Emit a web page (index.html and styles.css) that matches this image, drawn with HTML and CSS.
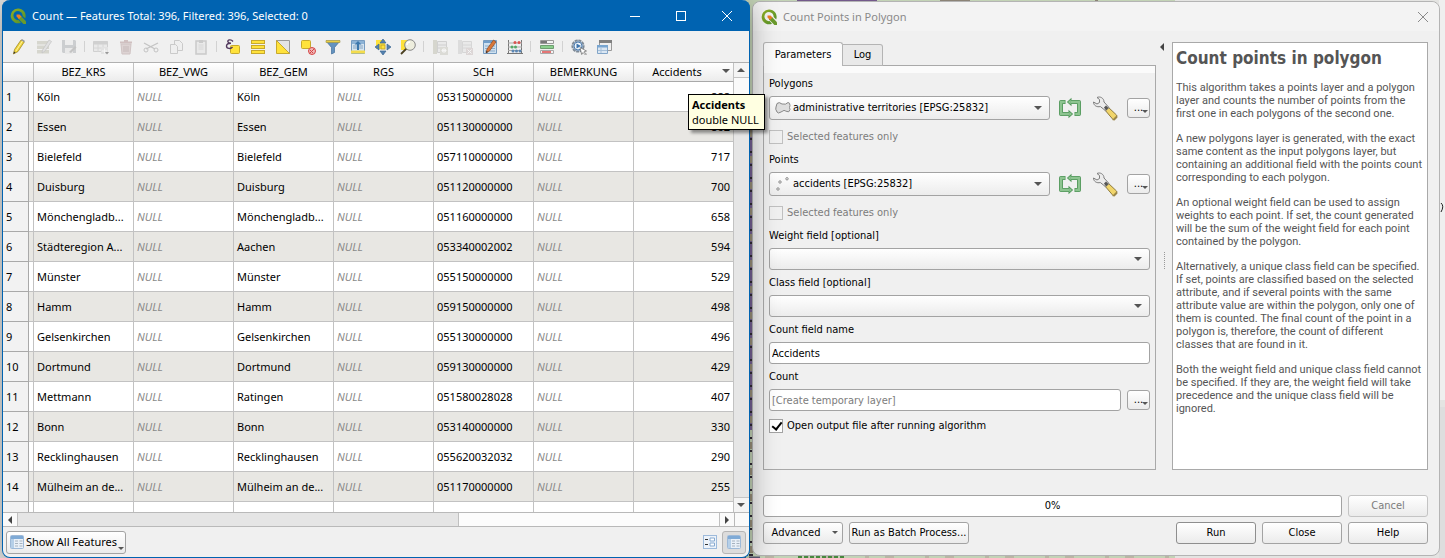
FILE: index.html
```html
<!DOCTYPE html>
<html lang="en">
<head>
<meta charset="utf-8">
<title>Count Points in Polygon</title>
<link rel="stylesheet" href="styles.css">
</head>
<body>
<svg width="0" height="0" class="defs" aria-hidden="true">
  <defs>
    <linearGradient id="qg" x1="0" y1="0" x2="1" y2="1"><stop offset="0" stop-color="#93b023"/><stop offset="1" stop-color="#4f8f2c"/></linearGradient>
    <symbol id="qgis" viewBox="0 0 16 16">
      <path d="M8 0.5a7.4 7.4 0 1 0 3 14.2l-2.4-2.6a4.6 4.6 0 1 1 4-4.2l2.6 2.6A7.5 7.5 0 0 0 8 .5z" fill="url(#qg)"/>
      <path d="M8 8h3l5 5.2V16h-2.600L8 10.600z" fill="#6a9a2c"/>
      <path d="M6.500 6.500h3l2 2-2.500 2.500-2.500-2.500z" fill="#ee7d25"/>
    </symbol>
    <symbol id="refresh" viewBox="0 0 24 22">
      <g fill="none" stroke="#4f9558" stroke-width="4" stroke-linejoin="round"><path d="M7.500 5H3v12H11M16.500 17h4.500v-12H13"/></g>
      <path d="M10.500 12.800v8.400l4.600-4.200zM13.500 .8v8.400L8.900 5z" fill="#4f9558"/>
      <g fill="none" stroke="#8dc490" stroke-width="2.400" stroke-linejoin="round"><path d="M6.800 5H3v12H11.500M17.200 17h3.800v-12H12.500"/></g>
      <path d="M11.400 14.700v4.600l2.600-2.300zM12.600 2.700v4.600L10 5z" fill="#8dc490"/>
    </symbol>
    <symbol id="wrench" viewBox="0 0 26 26">
      <path d="M12.500 13.500l3-3 9 8.500c1 1.500-1.500 5-3.500 4.500z" fill="#f1d56a" stroke="#8d7a3f"/>
      <path d="M20 24l5-5 .5 2.500-3 3z" fill="#9c8748"/>
      <path d="M5 1.500c3-1.500 7 .5 7 4.500l5 5.500-3.500 3.200-5.200-4.200C5 11.500 1.500 9.500 1.500 6l3.500 2 2.500-1.500V3.500z" fill="#ececec" stroke="#7d7d7d"/>
      <path d="M12 11.500l2-2 2.500 2.500-2.500 2.500z" fill="#555"/>
    </symbol>
    <symbol id="grid" viewBox="0 0 14 14">
      <rect x=".5" y=".5" width="13" height="13" rx="1" fill="#e9f0f8" stroke="#9db9d8"/>
      <rect x="1" y="1" width="12" height="3" fill="#7faad6"/><rect x="1" y="4" width="3" height="9" fill="#b5cfe8"/>
      <path d="M5 6h3M9.500 6h3M5 8.500h3M9.500 8.500h3M5 11h3M9.500 11h3" stroke="#a6b2bf"/>
    </symbol>
  </defs>
</svg>

<svg class="map" viewBox="0 0 1445 558" preserveAspectRatio="none" aria-hidden="true">
  <rect width="1445" height="558" fill="#e4e4e2"/>
  <rect x="745" width="430" height="558" fill="#c3d3b6"/>
  <path d="M751 130v300" stroke="#756093" stroke-width="4"/>
  <path d="M751 130v428" stroke="#998f78" stroke-width="4" stroke-dasharray="7 19"/>
  <path d="M751 138v420" stroke="#312b35" stroke-width="4" stroke-dasharray="2 11"/>
  <path d="M280 557.500H760" stroke="#5d5974" stroke-width="2" stroke-dasharray="7 3 12 5"/>
  <path d="M765 557H1175" stroke="#b9b6a4" stroke-width="3" stroke-dasharray="9 31 4 16"/>
  <path d="M798 557H845" stroke="#47883d" stroke-width="2" stroke-dasharray="4 2"/>
  <path d="M797 .500h80" stroke="#73598a"/><path d="M940 .500h30M1095 .500h3" stroke="#8b8376"/>
  <path d="M1439 0h6v400h-6z" fill="#efefef"/><path d="M1439 407h6v151h-6z" fill="#dedede"/>
  <path d="M1441 203q3.500 3 0 9" fill="none" stroke="#222"/>
</svg>

<main class="desktop">
<section class="window table-window">
  <header class="titlebar active">
    <svg class="logo"><use href="#qgis"/></svg>
    <h1>Count — Features Total: 396, Filtered: 396, Selected: 0</h1>
    <button aria-label="Minimize"><svg viewBox="0 0 10 10"><path d="M0 5.500h10"/></svg></button>
    <button aria-label="Maximize"><svg viewBox="0 0 10 10"><rect x=".5" y=".5" width="9" height="9"/></svg></button>
    <button aria-label="Close"><svg viewBox="0 0 10 10"><path d="M0 0l10 10M10 0L0 10"/></svg></button>
  </header>

  <div class="toolbar">
    <button aria-label="Toggle editing"><svg viewBox="0 0 16 16"><path d="M2.500 15l1-4.500L10 1l3.200 2L7 12.500z" fill="#f0d53b" stroke="#a08a2a" stroke-width=".8"/><path d="M10 1l1-1 3 2-.8 1.200z" fill="#999"/><path d="M5 12l6.500-10" stroke="#fff3a0"/><path d="M2.500 15l.4-2.500 1.700 1.100z" fill="#333"/></svg></button>
    <button disabled aria-label="Multi edit"><svg viewBox="0 0 16 16"><path d="M1 2h12v3.500H1zM1 6.500h12V10H1zM1 11h12v3.500H1z" fill="#aaa995"/><path d="M6 14l.5-3L13 1l2.500 1.500L9 12z" fill="#c9c9c9" stroke="#777" stroke-width=".7"/></svg></button>
    <button disabled aria-label="Save edits"><svg viewBox="0 0 16 16"><path d="M1 1h13l1 1v12H2l-1-1z" fill="#8e9499"/><path d="M4 1h8v5H4z" fill="#e8e8e8"/><path d="M4 9h8v6H4z" fill="#ddd"/><path d="M8 13l6-6 1.500 1.500L10 14z" fill="#777"/></svg></button>
    <i class="sep"></i>
    <button disabled aria-label="Add feature"><svg viewBox="0 0 16 16"><path d="M.5 2.500h14v10H.5z" fill="#ddd" stroke="#999"/><path d="M.5 2.500h14v3H.5z" fill="#999"/><path d="M1 9h13M5 5v8M10 5v8" stroke="#aaa"/><path d="M8 8h7v7H8z" fill="#ccc"/><path d="M11.500 9.500v5M9 12h5" stroke="#fff"/><path d="M12 13h4l-2 2.500z" fill="#000"/></svg></button>
    <button disabled aria-label="Delete selected"><svg viewBox="0 0 16 16"><path d="M2 3.500h12M6 2h4" stroke="#986e6e" stroke-width="2"/><path d="M3 5h10l-1 10H4z" fill="#bda2a2" stroke="#997777"/><path d="M6 7v6M8 7v6M10 7v6" stroke="#7b5d5d"/></svg></button>
    <button disabled aria-label="Cut"><svg viewBox="0 0 16 16"><path d="M1 4l11 6M3 10l12-6" stroke="#777" stroke-width="1.300"/><circle cx="13" cy="11" r="2" fill="none" stroke="#777"/><circle cx="3" cy="11" r="2" fill="none" stroke="#777"/></svg></button>
    <button disabled aria-label="Copy"><svg viewBox="0 0 16 16"><path d="M6.500 1.500h5l3 3v7h-8z" fill="#eee" stroke="#888"/><path d="M2.500 5.500h5l2 2v7h-7z" fill="#eee" stroke="#888"/></svg></button>
    <button disabled aria-label="Paste"><svg viewBox="0 0 16 16"><path d="M3 2h10v13H3z" fill="#ddd" stroke="#888" stroke-width="1.500"/><path d="M6 1h4v3H6z" fill="#888"/><path d="M5.500 6h5M5.500 8h5M5.500 10h5" stroke="#aaa"/></svg></button>
    <i class="sep"></i>
    <button aria-label="Select by expression"><svg viewBox="0 0 16 16"><rect x="5.500" y="6.500" width="9" height="8" rx="1" fill="#ffe23b" stroke="#c7a92d"/><path d="M8 2.500C6-.200 2 .800 3 3q.5 1.200 3 1.200Q1.500 4.200 1.500 7c0 3 4.500 3.200 6 .8" fill="none" stroke="#52395e" stroke-width="1.400"/></svg></button>
    <button aria-label="Select all"><svg viewBox="0 0 16 16"><g fill="#ffe23b" stroke="#c7a92d"><rect x="1.500" y="1.500" width="13" height="3"/><rect x="1.500" y="6.500" width="13" height="3"/><rect x="1.500" y="11.500" width="13" height="3"/></g></svg></button>
    <button aria-label="Invert selection"><svg viewBox="0 0 16 16"><path d="M1.500 1.500h13v13z" fill="#e4e4e4" stroke="#999"/><path d="M1.500 1.500v13h13z" fill="#ffe23b" stroke="#c7a92d"/></svg></button>
    <button aria-label="Deselect all"><svg viewBox="0 0 16 16"><rect x="1.500" y="1.500" width="9" height="8" rx="1" fill="#ffe23b" stroke="#c7a92d"/><circle cx="12" cy="12" r="3.500" fill="#f0b7b7" stroke="#d44545"/><path d="M9.500 14.500l5-5M10 11l3 3" stroke="#d44545"/></svg></button>
    <button aria-label="Filter"><svg viewBox="0 0 16 16"><path d="M1 2l5.500 6.500V15l3-1.500v-5L15 2z" fill="#6392bf" stroke="#416f9b" stroke-width=".7"/><path d="M1 1.500h14v2H1z" fill="#e9cf46" stroke="#9d8c35" stroke-width=".5"/></svg></button>
    <button aria-label="Move selection to top"><svg viewBox="0 0 16 16"><path d="M1.500 1.500h13v13h-13z" fill="#d5e4f0" stroke="#779cc1"/><path d="M2 2h12v3H2z" fill="#8db3d6"/><path d="M3 7h10M3 9h10" stroke="#87a5c2"/><path d="M1 11.500h14v3H1z" fill="#f4dc4c"/><path d="M8 2l3.500 3.500H9V11H7V5.500H4.500z" fill="#3c77ac"/></svg></button>
    <button aria-label="Pan to rows"><svg viewBox="0 0 16 16"><path d="M1 1h9v9H1z" fill="#ffe23b"/><path d="M8 0l3 4H5zM8 16l3-4H5zM0 8l4-3v6zM16 8l-4-3v6z" fill="#5481af" stroke="#3c6792" stroke-width=".7"/><rect x="6" y="6" width="4" height="4" fill="#ffe23b" stroke="#c6aa2d"/></svg></button>
    <button aria-label="Zoom to rows"><svg viewBox="0 0 16 16"><path d="M1 1h7v10H1z" fill="#ffe23b"/><path d="M1 15l5.500-5.500" stroke="#4b4020" stroke-width="1.800"/><circle cx="10" cy="6" r="5.300" fill="#eeeede" stroke="#888"/><path d="M7 6a3 3 0 0 1 3-3" stroke="#fff" fill="none" stroke-width="1.500"/></svg></button>
    <i class="sep"></i>
    <button disabled aria-label="New field"><svg viewBox="0 0 16 16"><path d="M1 1h4v14H1z" fill="#aaa995"/><path d="M5.500 2.500h9v11h-9zM5 6h9M5 9h9" fill="#ddd" stroke="#999"/><path d="M8 8h8v8H8z" fill="#b8b8aa"/><path d="M12 9v5M9.500 11.500h5M10 10l4 3M14 10l-4 3" stroke="#fff"/></svg></button>
    <button disabled aria-label="Delete field"><svg viewBox="0 0 16 16"><path d="M1 1h4v14H1z" fill="#bbb"/><path d="M5.500 2.500h9v11h-9zM5 6h9M5 9h9" fill="#ddd" stroke="#aaa"/><path d="M9 9h7v7H9z" fill="#bbaaaa"/><path d="M10.500 10.500l4 4M14.500 10.500l-4 4" stroke="#fff"/></svg></button>
    <button aria-label="Organize columns"><svg viewBox="0 0 16 16"><path d="M1.500 1.500h13v13h-13z" fill="#cfe0ef" stroke="#759bc0"/><path d="M2 2h12v2H2z" fill="#709ecb"/><path d="M3 7h10M3 9.500h10M3 12h10" stroke="#8aabc9"/><path d="M4 14l1-4 6.500-9L14 3 7.500 12z" fill="#d97739" stroke="#8a4a26" stroke-width=".7"/><path d="M4 14l.5-2 1.500 1z" fill="#222"/></svg></button>
    <button aria-label="Field calculator"><svg viewBox="0 0 16 16"><path d="M1.500 1v14M14.500 1v14M0 14.500h16" stroke="#777" fill="none"/><path d="M1 4h14M1 8h14M1 11.500h14" stroke="#aaa"/><g fill="#d9534f"><circle cx="8" cy="3.500" r="1.500"/><circle cx="12" cy="3.500" r="1.500"/></g><g fill="#55a868"><circle cx="5" cy="8" r="1.500"/><circle cx="8.500" cy="8" r="1.500"/></g><g fill="#5a86b4"><circle cx="6" cy="12" r="1.500"/><circle cx="9.500" cy="12" r="1.500"/><circle cx="13" cy="12" r="1.500"/></g></svg></button>
    <i class="sep"></i>
    <button aria-label="Conditional formatting"><svg viewBox="0 0 16 16"><path d="M1.500 1.500h13v3h-13z" fill="#f4f4f4" stroke="#999"/><path d="M2 2h6v2H2z" fill="#777"/><path d="M1.500 6.500h13v3h-13z" fill="#89cf8c" stroke="#6e9d70"/><path d="M1.500 11.500h13v3h-13z" fill="#f4f4f4" stroke="#aaa"/><path d="M3 13h9" stroke="#df4c4c" stroke-width="1.500"/></svg></button>
    <i class="sep"></i>
    <button aria-label="Actions"><svg viewBox="0 0 16 16"><circle cx="7" cy="7" r="5.700" fill="#a8bfd8" stroke="#7e8995" stroke-width="1.800" stroke-dasharray="3 .8"/><circle cx="7" cy="7" r="4" fill="#f1f6fb" stroke="#4f7dad"/><path d="M5.500 4.500L10 7l-4.500 2.500z" fill="#3c74ae"/><path d="M9 8.500l6.500 3.500-2.500.8 2.500 2.500-1 .7-2.500-2.500-1.300 2z" fill="#fff" stroke="#777" stroke-width=".8"/></svg></button>
    <button aria-label="Dock window"><svg viewBox="0 0 16 16"><path d="M3.500 1.500h12v10h-12z" fill="#efefef" stroke="#999"/><path d="M3 1h13v3H3z" fill="#808080"/><path d="M1.500 6.500h10v8h-10z" fill="#dbe7f3" stroke="#82a5c8"/><path d="M1 6h11v2.500H1z" fill="#78a5d0"/><path d="M5 9v5M2 11.500h9" stroke="#a6bfd8"/></svg></button>
  </div>

  <div class="grid-area">
    <div class="grid-view">
      <table>
        <colgroup><col class="c-num"><col class="c-gap"><col span="7"></colgroup>
        <thead><tr><th colspan="2"></th><th>BEZ_KRS</th><th>BEZ_VWG</th><th>BEZ_GEM</th><th>RGS</th><th>SCH</th><th>BEMERKUNG</th><th class="sorted">Accidents<i class="down"></i></th></tr></thead>
        <tbody>
          <tr><th>1</th><td></td><td>Köln</td><td class="null">NULL</td><td>Köln</td><td class="null">NULL</td><td>053150000000</td><td class="null">NULL</td><td class="num">888</td></tr>
          <tr><th>2</th><td></td><td>Essen</td><td class="null">NULL</td><td>Essen</td><td class="null">NULL</td><td>051130000000</td><td class="null">NULL</td><td class="num">802</td></tr>
          <tr><th>3</th><td></td><td>Bielefeld</td><td class="null">NULL</td><td>Bielefeld</td><td class="null">NULL</td><td>057110000000</td><td class="null">NULL</td><td class="num">717</td></tr>
          <tr><th>4</th><td></td><td>Duisburg</td><td class="null">NULL</td><td>Duisburg</td><td class="null">NULL</td><td>051120000000</td><td class="null">NULL</td><td class="num">700</td></tr>
          <tr><th>5</th><td></td><td>Mönchengladb...</td><td class="null">NULL</td><td>Mönchengladb...</td><td class="null">NULL</td><td>051160000000</td><td class="null">NULL</td><td class="num">658</td></tr>
          <tr><th>6</th><td></td><td>Städteregion A...</td><td class="null">NULL</td><td>Aachen</td><td class="null">NULL</td><td>053340002002</td><td class="null">NULL</td><td class="num">594</td></tr>
          <tr><th>7</th><td></td><td>Münster</td><td class="null">NULL</td><td>Münster</td><td class="null">NULL</td><td>055150000000</td><td class="null">NULL</td><td class="num">529</td></tr>
          <tr><th>8</th><td></td><td>Hamm</td><td class="null">NULL</td><td>Hamm</td><td class="null">NULL</td><td>059150000000</td><td class="null">NULL</td><td class="num">498</td></tr>
          <tr><th>9</th><td></td><td>Gelsenkirchen</td><td class="null">NULL</td><td>Gelsenkirchen</td><td class="null">NULL</td><td>055130000000</td><td class="null">NULL</td><td class="num">496</td></tr>
          <tr><th>10</th><td></td><td>Dortmund</td><td class="null">NULL</td><td>Dortmund</td><td class="null">NULL</td><td>059130000000</td><td class="null">NULL</td><td class="num">429</td></tr>
          <tr><th>11</th><td></td><td>Mettmann</td><td class="null">NULL</td><td>Ratingen</td><td class="null">NULL</td><td>051580028028</td><td class="null">NULL</td><td class="num">407</td></tr>
          <tr><th>12</th><td></td><td>Bonn</td><td class="null">NULL</td><td>Bonn</td><td class="null">NULL</td><td>053140000000</td><td class="null">NULL</td><td class="num">330</td></tr>
          <tr><th>13</th><td></td><td>Recklinghausen</td><td class="null">NULL</td><td>Recklinghausen</td><td class="null">NULL</td><td>055620032032</td><td class="null">NULL</td><td class="num">290</td></tr>
          <tr><th>14</th><td></td><td>Mülheim an de...</td><td class="null">NULL</td><td>Mülheim an de...</td><td class="null">NULL</td><td>051170000000</td><td class="null">NULL</td><td class="num">255</td></tr>
          <tr><th></th><td></td><td></td><td></td><td></td><td></td><td></td><td></td><td></td></tr>
        </tbody>
      </table>
      <div class="tooltip" role="tooltip"><b>Accidents</b><br>double NULL</div>
    </div>
    <div class="vscroll"><button aria-label="Scroll up"><i class="up"></i></button><span></span><button aria-label="Scroll down"><i class="down"></i></button></div>
    <div class="hscroll"><button aria-label="Scroll left"><i class="left"></i></button><span class="thumb"></span><span class="track"></span><button aria-label="Scroll right"><i class="right"></i></button></div>
    <div class="corner"></div>
  </div>

  <footer class="statusbar">
    <button class="btn show-all"><svg><use href="#grid"/></svg>Show All Features<i class="down mini"></i></button>
    <button class="view" aria-label="Form view"><svg viewBox="0 0 14 14"><rect x=".5" y=".5" width="13" height="13" fill="#edf3fa" stroke="#9dbadb"/><path d="M2 4.500h3M2 9.500h3" stroke="#333"/><path d="M7 3h4.500v3H7zM7 8h4.500v3H7z" fill="#fff" stroke="#86a9d0"/></svg></button>
    <button class="view on" aria-label="Table view"><svg><use href="#grid"/></svg></button>
  </footer>
</section>

<section class="window dialog">
  <header class="titlebar">
    <svg class="logo"><use href="#qgis"/></svg>
    <h1>Count Points in Polygon</h1>
    <button aria-label="Close"><svg viewBox="0 0 10 10"><path d="M0 0l10 10M10 0L0 10"/></svg></button>
  </header>

  <div class="dialog-main">
    <div class="tabs">
      <div class="tablist" role="tablist">
        <button role="tab" aria-selected="true" class="tab current">Parameters</button>
        <button role="tab" aria-selected="false" class="tab">Log</button>
      </div>
      <form class="pane" id="params">
        <label class="caption" for="polygons">Polygons</label>
        <div class="row">
          <div class="combo tall"><svg viewBox="0 0 16 14"><path d="M2 2.500Q4 .500 7 3q4 1 6-1.500 2 0 2 3-1 2 0 4-1 3.500-3 2Q9 8 6 11q-3 2-4 0Q0 8 1 6z" fill="#dedede" stroke="#888"/></svg><select id="polygons"><option>administrative territories [EPSG:25832]</option></select><i class="down"></i></div>
          <button type="button" class="flat" aria-label="Iterate over this layer"><svg class="refresh"><use href="#refresh"/></svg></button>
          <button type="button" class="flat" aria-label="Advanced options"><svg class="wrench"><use href="#wrench"/></svg></button>
          <button type="button" class="btn dots">...<i class="down mini"></i></button>
        </div>
        <label class="check"><input type="checkbox" disabled>Selected features only</label>
        <label class="caption" for="points">Points</label>
        <div class="row">
          <div class="combo tall"><svg viewBox="0 0 16 14"><g fill="#fff" stroke="#888"><circle cx="12" cy="1.800" r="1.200"/><circle cx="5" cy="5" r="1.200"/><circle cx="3" cy="12" r="1.200"/></g></svg><select id="points"><option>accidents [EPSG:25832]</option></select><i class="down"></i></div>
          <button type="button" class="flat" aria-label="Iterate over this layer"><svg class="refresh"><use href="#refresh"/></svg></button>
          <button type="button" class="flat" aria-label="Advanced options"><svg class="wrench"><use href="#wrench"/></svg></button>
          <button type="button" class="btn dots">...<i class="down mini"></i></button>
        </div>
        <label class="check"><input type="checkbox" disabled>Selected features only</label>
        <label class="caption" for="weight">Weight field [optional]</label>
        <div class="combo"><select id="weight"><option></option></select><i class="down"></i></div>
        <label class="caption" for="class">Class field [optional]</label>
        <div class="combo"><select id="class"><option></option></select><i class="down"></i></div>
        <label class="caption" for="name">Count field name</label>
        <input class="text" id="name" type="text" value="Accidents">
        <label class="caption" for="out">Count</label>
        <div class="row">
          <input class="text" id="out" type="text" placeholder="[Create temporary layer]">
          <button type="button" class="btn dots">...<i class="down mini"></i></button>
        </div>
        <label class="check open"><input type="checkbox" checked>Open output file after running algorithm</label>
      </form>
    </div>
    <div class="splitter"><i class="left"></i><span></span></div>
    <article class="help">
      <h2>Count points in polygon</h2>
      <p>This algorithm takes a points layer and a polygon<br>layer and counts the number of points from the<br>first one in each polygons of the second one.</p>
      <p>A new polygons layer is generated, with the exact<br>same content as the input polygons layer, but<br>containing an additional field with the points count<br>corresponding to each polygon.</p>
      <p>An optional weight field can be used to assign<br>weights to each point. If set, the count generated<br>will be the sum of the weight field for each point<br>contained by the polygon.</p>
      <p>Alternatively, a unique class field can be specified.<br>If set, points are classified based on the selected<br>attribute, and if several points with the same<br>attribute value are within the polygon, only one of<br>them is counted. The final count of the point in a<br>polygon is, therefore, the count of different<br>classes that are found in it.</p>
      <p>Both the weight field and unique class field cannot<br>be specified. If they are, the weight field will take<br>precedence and the unique class field will be<br>ignored.</p>
    </article>
  </div>

  <div class="actions">
    <div class="progress" role="progressbar" aria-valuenow="0">0%</div>
    <button class="btn push" disabled>Cancel</button>
  </div>
  <div class="actions">
    <button class="btn push menu">Advanced<i class="down mini"></i></button>
    <button class="btn batch">Run as Batch Process...</button>
    <span class="fill"></span>
    <button class="btn push run">Run</button>
    <button class="btn push">Close</button>
    <button class="btn push">Help</button>
  </div>
</section>
</main>
</body>
</html>
```

FILE: styles.css
```css
* { box-sizing: border-box; }

body {
  margin: 0;
  height: 100vh;
  overflow: hidden;
  color: #000;
  font: 11px/16px "DejaVu Sans Condensed", "Noto Sans", sans-serif;
}

button, input, select { font: inherit; color: inherit; margin: 0; }
button { border: 0; background: none; padding: 0; }
svg { display: block; flex: none; }
.defs { position: absolute; }
.map { position: absolute; inset: 0; width: 100%; height: 100%; z-index: -1; }

.desktop {
  display: grid;
  grid-template-columns: 748fr 688fr;
  gap: 2px;
  height: 100%;
  padding: 0 5px 0 2px;
}

.window { display: flex; flex-direction: column; min-width: 0; background: #f0f0f0; }

.table-window {
  position: relative;
  z-index: 1;
  border: 1px solid #0063b1;
  border-top: 0;
  border-radius: 8px;
  font-family: "Noto Sans", sans-serif;
  box-shadow: 0 4px 28px rgba(0, 0, 0, .36);
}

.dialog {
  margin: 1px 0 2px;
  border: 1px solid #b4b4b4;
  border-radius: 8px;
  padding: 0 11px 11px 10px;
}

/* Title bars */
.titlebar {
  display: flex;
  align-items: center;
  height: 31px;
  padding-left: 8px;
  color: #8a8a8a;
  background: #f3f3f3;
  border-radius: 8px 8px 0 0;
  font-family: "Noto Sans", sans-serif;
}
.dialog .titlebar { height: 29px; margin: 0 -11px 0 -10px; }
.titlebar.active { color: #fff; background: #0063b1; margin: 0 -1px; }
.titlebar h1 { flex: 1; margin: 0 0 0 6px; font-size: 11px; font-weight: 400; white-space: nowrap; }
.logo { width: 16px; height: 16px; }
.titlebar button { width: 46px; height: 29px; display: grid; place-items: center; }
.dialog .titlebar button { width: 32px; }
.titlebar button svg { width: 10px; height: 10px; overflow: visible; fill: none; stroke: currentColor; }

/* Toolbar */
.toolbar { display: flex; align-items: center; height: 31px; padding-left: 3px; }
.toolbar button { display: grid; place-items: center; width: 25px; height: 25px; }
.toolbar svg { width: 16px; height: 16px; }
.toolbar button:disabled svg { opacity: .36; }
.sep { width: 7px; height: 11px; background: linear-gradient(#d2d2d2, #d2d2d2) center / 1px 100% no-repeat; }

/* Arrows */
.down, .up, .left, .right { display: block; width: 0; height: 0; border: 4px solid transparent; flex: none; }
.down { border-top-color: #555; border-bottom: 0; }
.up { border-bottom-color: #555; border-top: 0; }
.left { border-right-color: #444; border-left: 0; }
.right { border-left-color: #444; border-right: 0; }
.mini { border-width: 3px 3px 0; }

/* Attribute table */
.grid-area {
  flex: 1;
  min-height: 0;
  display: grid;
  grid-template: minmax(0, 1fr) 15px / minmax(0, 1fr) 15px;
  border-top: 1px solid #b0b0b0;
}
.grid-view { position: relative; min-height: 0; background: #fff; contain: size; clip-path: inset(0 -40px 0 0); }
table { width: 100%; table-layout: fixed; border-collapse: separate; border-spacing: 0; }
.c-num { width: 26px; }
.c-gap { width: 5px; }
tr { height: 30px; }
thead tr { height: 19px; }
th, td { padding: 0 3px; text-align: left; font-weight: 400; white-space: nowrap; border: solid #c2c2c2; border-width: 0 1px 1px 0; line-height: 16px; }
thead th { position: relative; text-align: center; background: linear-gradient(#fff, #ececec); border-bottom-color: #a9a9a9; }
thead th.sorted { padding-right: 16px; }
.sorted .down { position: absolute; right: 3px; top: 6px; }
tbody th { background: #f2f2f2; border-color: #a9a9a9; }
tbody tr:nth-child(even) td { background: #e8e7e3; }
.null { color: #8a8a8a; font-style: italic; }
.num { text-align: right; }

.tooltip {
  position: absolute;
  right: -31px;
  top: 31px;
  width: 77px;
  height: 36px;
  padding: 2px 3px;
  border: 1px solid #000;
  background: #ffffe1;
  line-height: 15px;
  white-space: nowrap;
  box-shadow: 3px 3px 3px rgba(0, 0, 0, .4);
}

.vscroll { display: flex; flex-direction: column; background: #f4f4f4; }
.vscroll span { flex: 1; border: solid #c4c4c4; border-width: 1px 0; background: linear-gradient(#fafafa 9%, #e6e6e6 9%); }
.vscroll button, .hscroll button { display: grid; place-items: center; width: 14px; height: 14px; }
.hscroll, .corner { border: solid #b9b9b9; border-width: 1px 0; background: #fafafa; }
.corner { border-left-width: 1px; }
.hscroll { display: flex; }
.hscroll .thumb { flex: 442; background: #e5e5e5; border: solid #c0c0c0; border-width: 0 1px; }
.hscroll .track { flex: 261; background: #fcfcfc; border-right: 1px solid #c0c0c0; }

/* Buttons */
.btn {
  position: relative;
  height: 22px;
  border: 1px solid #a3a3a3;
  border-radius: 3px;
  background: linear-gradient(#fff, #ebebeb);
  white-space: nowrap;
}
.btn:disabled { color: #7c7c7c; border-color: #c4c4c4; }
.btn .mini { position: absolute; right: 1px; bottom: 3px; }

.statusbar { display: flex; align-items: center; height: 30px; padding: 0 3px; }
.show-all { display: flex; align-items: center; gap: 2px; width: 120px; height: 23px; padding-left: 3px; margin-right: auto; }
.statusbar svg { width: 14px; height: 14px; }
.view { display: grid; place-items: center; width: 24px; height: 23px; border: 1px solid transparent; border-radius: 3px; }
.view.on { border-color: #b5b5b5; background: #dcdcdc; }

/* Dialog body */
.dialog-main {
  flex: 1;
  display: grid;
  grid-template-columns: minmax(0, 393fr) 16px minmax(0, 256fr);
  min-height: 0;
  padding: 11px 0 25px;
}
.tabs { display: flex; flex-direction: column; }
.tablist { display: flex; align-items: flex-end; height: 24px; margin-bottom: -1px; position: relative; }
.tab { width: 40px; height: 22px; border: 1px solid #b4b4b4; border-left: 0; background: #e9e9e9; border-radius: 0 3px 0 0; }
.tab.current { width: 80px; height: 24px; border-left: 1px solid #b4b4b4; border-bottom: 0; background: #fbfbfb; border-radius: 3px 3px 0 0; }
.pane {
  flex: 1;
  display: flex;
  flex-direction: column;
  min-height: 0;
  padding: 10px 5px 0;
  border: 1px solid #a9a9a9;
  background: linear-gradient(#fbfbfb 7px, #f0f0f0 7px);
}
.caption { height: 16px; margin-bottom: 4px; }
.row { display: flex; align-items: center; gap: 6px; }
.combo {
  display: flex;
  align-items: center;
  height: 22px;
  min-width: 0;
  padding: 0 7px 0 3px;
  border: 1px solid #a3a3a3;
  border-radius: 3px;
  background: linear-gradient(#fff, #ececec);
}
.combo.tall { flex: 1; height: 24px; padding-left: 5px; margin-right: 2px; }
.combo svg { width: 16px; height: 14px; }
.combo select { flex: 1; min-width: 0; height: 20px; appearance: none; border: 0; padding: 0 2px; background: none; }
.combo, .text { margin-bottom: 5px; }
.row .combo, .row .text { margin-bottom: 0; }
.refresh { width: 24px; height: 22px; }
.wrench { width: 26px; height: 26px; }
.row .flat { height: 24px; display: grid; place-items: center; }
.row .flat + .flat { margin: 0 3px 0 4px; }
.dots { width: 23px; height: 20px; }
.dots .mini { bottom: 4px; }
.text { height: 22px; min-width: 0; padding: 0 2px; border: 1px solid #a3a3a3; border-radius: 3px; background: #fff; }
.row .text { flex: 1; }
.text::placeholder { color: #7c7c7c; opacity: 1; }
.check { display: flex; align-items: center; gap: 4px; height: 14px; margin: 10px 0 8px; }
.check:has(:disabled) { color: #7c7c7c; }
.check.open { margin-top: 8px; }
.check input {
  appearance: none;
  width: 14px;
  height: 14px;
  border: 1px solid #a3a3a3;
  background: #fff;
}
.check input:disabled { background: #f0f0f0; border-color: #c0c0c0; }
.check input:checked::after {
  content: "";
  display: block;
  width: 4px;
  height: 8px;
  margin: 0 0 0 4px;
  border: solid #000;
  border-width: 0 2px 2px 0;
  transform: rotate(38deg);
}

.splitter { display: flex; flex-direction: column; align-items: center; }
.splitter .left { margin: 1px 4px 0 0; }
.splitter span { height: 17px; margin: auto 0; border-left: 1px dotted #999; }

.help { padding: 6px 3px; border: 1px solid #a9a9a9; background: #fff; color: #555; font-family: Roboto, sans-serif; line-height: 13px; white-space: nowrap; overflow: hidden; }
.help h2 { margin: 0 0 14px; font: bold 17px/18px "DejaVu Sans Condensed", "Noto Sans", sans-serif; }
.help p { margin: 0 0 12px; }

.actions { display: flex; gap: 6px; }
.actions + .actions { margin-top: 5px; }
.progress { flex: 1; height: 22px; border: 1px solid #a3a3a3; border-radius: 3px; background: #fff; text-align: center; line-height: 20px; }
.push { width: 80px; }
.batch { width: 120px; }
.menu { padding-right: 14px; }
.menu .mini { right: 4px; bottom: 9px; }
.run { border-color: #8e8e8e; }
.fill { flex: 1; }
```
